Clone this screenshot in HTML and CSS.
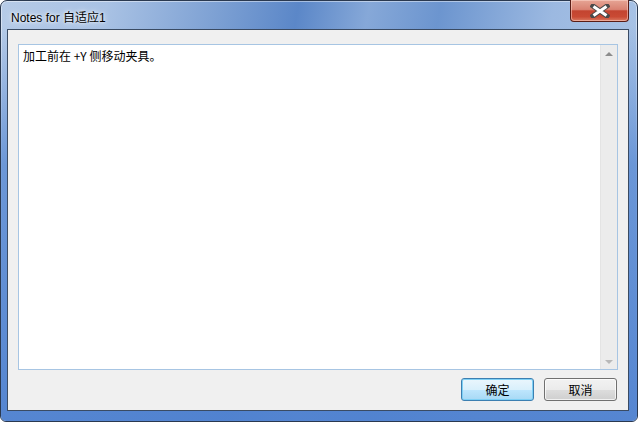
FILE: index.html
```html
<!DOCTYPE html>
<html>
<head>
<meta charset="utf-8">
<link rel="stylesheet" href="styles.css">
</head>
<body>
<div class="window">
  <div class="titlebar">
    <span class="title">Notes for 自适应1</span>
    <div class="close">
      <svg width="20" height="14" viewBox="0 0 20 14">
        <path d="M3 2 L17 12 M17 2 L3 12" stroke="#4a4a4a" stroke-width="5" stroke-linecap="square" fill="none"/>
        <path d="M3.5 2.5 L16.5 11.5 M16.5 2.5 L3.5 11.5" stroke="#ffffff" stroke-width="3" stroke-linecap="butt" fill="none"/>
      </svg>
    </div>
  </div>
  <div class="client">
    <div class="textbox">
      <div class="text">加工前在 +Y 侧移动夹具。</div>
      <div class="scrollbar">
        <span class="arrow up"></span>
        <span class="arrow down"></span>
      </div>
    </div>
    <div class="buttons">
      <button class="btn default">确定</button>
      <button class="btn">取消</button>
    </div>
  </div>
</div>
</body>
</html>
```
FILE: styles.css
```css
* { box-sizing: border-box; }
html, body { margin: 0; padding: 0; }
body {
  width: 638px;
  height: 422px;
  background: #ffffff;
  font-family: "Noto Sans", "Noto Sans CJK SC", sans-serif;
  overflow: hidden;
}
.window {
  position: relative;
  width: 638px;
  height: 422px;
  border: 1px solid #2a3950;
  border-radius: 7px 7px 6px 6px;
  background: linear-gradient(100deg, #b6cbe7 0%, #a9c2e4 15%, #7fa2d4 30%, #5b87c8 42%, #86a8d8 52%, #6c95cf 62%, #9cb9e1 78%, #b0c9e8 100%);
  padding: 0 8px 10px 6px;
  display: flex;
  flex-direction: column;
  box-shadow: inset 0 0 0 1px rgba(255,255,255,0.45);
}
.window::after {
  content: "";
  position: absolute;
  left: 0; right: 0; bottom: 0; height: 395px;
  border-radius: 0 0 5px 5px;
  background: linear-gradient(180deg, rgba(90,138,208,0) 0%, rgba(85,135,210,0.75) 35%, rgba(80,130,208,0.95) 100%);
  pointer-events: none;
  z-index: 0;
}
.titlebar {
  position: relative;
  height: 28px;
  flex: none;
  z-index: 1;
}
.title {
  position: absolute;
  left: 4px;
  top: 9px;
  font-family: "Liberation Sans", "Noto Sans CJK SC", sans-serif;
  font-size: 12px;
  line-height: 16px;
  color: #000;
  text-shadow: 0 0 6px rgba(255,255,255,0.9), 0 0 3px rgba(255,255,255,0.9);
}
.close {
  position: absolute;
  right: 0;
  top: -1px;
  width: 59px;
  height: 22px;
  border: 1px solid #5a1d16;
  border-top: none;
  border-radius: 0 0 4px 4px;
  background: linear-gradient(180deg, #e6a595 0%, #d98272 45%, #c34430 52%, #c94a34 80%, #da7a62 100%);
  box-shadow: inset 0 0 0 1px rgba(255,220,210,0.5);
  display: flex;
  align-items: center;
  justify-content: center;
}
.client {
  position: relative;
  z-index: 1;
  flex: 1;
  background: #f0f0f0;
  border: 1px solid #3a4b63;
  padding: 14px 10px 9px 10px;
  display: flex;
  flex-direction: column;
}
.textbox {
  flex: 1;
  background: #fff;
  border: 1px solid #a7c5e3;
  display: flex;
}
.text {
  flex: 1;
  padding: 3px 4px;
  font-family: "Noto Sans CJK SC", sans-serif;
  font-size: 12px;
  line-height: 16px;
  color: #000;
}
.scrollbar {
  width: 17px;
  background: #ececec;
  border-left: 1px solid #e4e4e4;
  display: flex;
  flex-direction: column;
  justify-content: space-between;
  align-items: center;
  padding: 7px 0 5px;
}
.arrow {
  width: 0;
  height: 0;
  border-left: 4px solid transparent;
  border-right: 4px solid transparent;
}
.arrow.up { border-bottom: 4px solid #8c8c8c; }
.arrow.down { border-top: 4px solid #b8b8b8; }
.buttons {
  flex: none;
  margin-top: 8px;
  display: flex;
  justify-content: flex-end;
  gap: 10px;
  padding-right: 1px;
}
.btn {
  width: 73px;
  height: 23px;
  margin: 0;
  padding: 0;
  border: 1px solid #707070;
  border-radius: 3px;
  background: linear-gradient(180deg, #f2f2f2 0%, #ebebeb 50%, #dddddd 51%, #cfcfcf 100%);
  box-shadow: inset 0 0 0 1px rgba(255,255,255,0.7);
  font-family: "Noto Sans CJK SC", sans-serif;
  font-size: 12px;
  color: #000;
  line-height: 20px;
}
.btn.default {
  border-color: #3c7fb1;
  background: linear-gradient(180deg, #eaf6fd 0%, #d9f0fc 50%, #bee6fd 51%, #a7d9f5 100%);
  box-shadow: inset 0 0 0 1px #7ed0f5;
}
```
